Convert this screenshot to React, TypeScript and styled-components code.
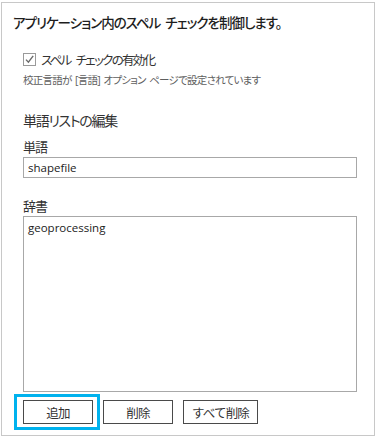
import styled, {createGlobalStyle} from 'styled-components';

const GlobalStyle = createGlobalStyle`
    html, body {
        margin: 0;
        padding: 0;
        background: #ffffff;
    }
    body {
        font-family: "Open Sans", "Noto Sans CJK JP", sans-serif;
        font-feature-settings: "palt";
        color: #333333;
    }
`;

const Panel = styled.div`
    box-sizing: border-box;
    margin: 2px 0 0 1px;
    width: 374px;
    height: 434px;
    border: 1px solid #c8c8c8;
    padding: 9px 0 0 11px;
    display: flex;
    flex-direction: column;
`;

const Title = styled.div`
    font-family: "Noto Sans CJK JP", sans-serif;
    font-size: 13.5px;
    line-height: 20px;
    font-weight: 500;
    color: #1e1e1e;
    letter-spacing: -1px;
    word-spacing: 3px;
`;

const Body = styled.div`
    padding-left: 10px;
    width: 334px;
    display: flex;
    flex-direction: column;
`;

const CheckRow = styled.label`
    margin-top: 19px;
    display: flex;
    align-items: center;
    gap: 5px;
    height: 16px;
    font-family: "Noto Sans CJK JP", sans-serif;
    font-size: 12.5px;
    letter-spacing: -1.7px;
    word-spacing: 4px;
    color: #333333;
`;

const CheckBox = styled.span`
    box-sizing: border-box;
    width: 13px;
    height: 13px;
    border: 1px solid #9a9a9a;
    display: flex;
    align-items: center;
    justify-content: center;
`;

const Note = styled.div`
    margin-top: 5px;
    font-size: 10.5px;
    line-height: 16px;
    letter-spacing: -0.75px;
    word-spacing: 1.5px;
    color: #5e5e5e;
`;

const Heading = styled.div`
    margin-top: 22px;
    font-family: "Noto Sans CJK JP", sans-serif;
    font-size: 14px;
    line-height: 20px;
    letter-spacing: -1.3px;
    color: #333333;
`;

const FieldLabel = styled.div<{ $gap: number }>`
    margin-top: ${p => p.$gap}px;
    font-family: "Noto Sans CJK JP", sans-serif;
    font-size: 13px;
    line-height: 18px;
    letter-spacing: -1px;
    color: #333333;
`;

const TextBox = styled.input`
    box-sizing: border-box;
    margin: 1px 0 0 0;
    width: 334px;
    height: 21px;
    border: 1px solid #a8a8a8;
    padding: 0 4px;
    font-family: "Open Sans", sans-serif;
    font-size: 11.5px;
    color: #222222;
    outline: none;
`;

const TextArea = styled.textarea`
    box-sizing: border-box;
    margin: 1px 0 0 0;
    width: 334px;
    height: 176px;
    border: 1px solid #a8a8a8;
    padding: 3px 4px;
    font-family: "Open Sans", sans-serif;
    font-size: 11.5px;
    line-height: 16px;
    color: #222222;
    resize: none;
    outline: none;
`;

const ButtonRow = styled.div`
    margin-top: 8px;
    display: flex;
    gap: 10px;
`;

const Button = styled.button<{ $width: number, $focused?: boolean }>`
    position: relative;
    box-sizing: border-box;
    width: ${p => p.$width}px;
    height: 24px;
    border: 1px solid #4a4a4a;
    background: #ffffff;
    font-family: "Noto Sans CJK JP", sans-serif;
    font-size: 12.5px;
    letter-spacing: -0.8px;
    color: #333333;
    padding: 0;
    &::after {
        content: '';
        display: ${p => p.$focused ? 'block' : 'none'};
        position: absolute;
        top: -7px;
        left: -10px;
        right: -8px;
        bottom: -7px;
        border: 3px solid #00b2ee;
    }
`;

export default function App() {
    return (
        <>
            <GlobalStyle/>
            <Panel>
                <Title>アプリケーション内のスペル チェックを制御します。</Title>
                <Body>
                    <CheckRow>
                        <CheckBox>
                            <svg width="11" height="11" viewBox="0 0 11 11">
                                <path d="M2 5.6 L4.4 8.2 L9.2 1.8" fill="none" stroke="#6a6a6a" strokeWidth="1.4"/>
                            </svg>
                        </CheckBox>
                        スペル チェックの有効化
                    </CheckRow>
                    <Note>校正言語が [言語] オプション ページで設定されています</Note>
                    <Heading>単語リストの編集</Heading>
                    <FieldLabel $gap={8}>単語</FieldLabel>
                    <TextBox readOnly defaultValue="shapefile"/>
                    <FieldLabel $gap={19}>辞書</FieldLabel>
                    <TextArea readOnly defaultValue="geoprocessing"/>
                    <ButtonRow>
                        <Button $width={70} $focused>追加</Button>
                        <Button $width={70}>削除</Button>
                        <Button $width={75}>すべて削除</Button>
                    </ButtonRow>
                </Body>
            </Panel>
        </>
    );
}
